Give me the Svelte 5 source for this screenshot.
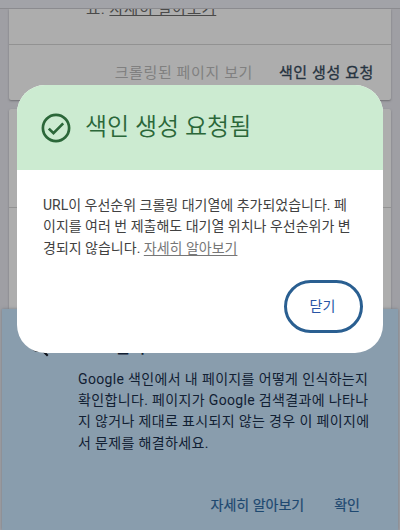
<script lang="ts">
	const message = [
		'URL이 우선순위 크롤링 대기열에 추가되었습니다. 페',
		'이지를 여러 번 제출해도 대기열 위치나 우선순위가 변'
	];

	const tip = [
		'Google 색인에서 내 페이지를 어떻게 인식하는지',
		'확인합니다. 페이지가 Google 검색결과에 나타나',
		'지 않거나 제대로 표시되지 않는 경우 이 페이지에',
		'서 문제를 해결하세요.'
	];
</script>

<div class="screen">
	<header class="topbar"></header>

	<main>
		<section class="card status">
			<p class="more"><span>요. <a href="#more">자세히 알아보기</a></span></p>
			<div class="actions">
				<span class="disabled">크롤링된 페이지 보기</span>
				<span class="request">색인 생성 요청</span>
			</div>
		</section>
		<section class="card details">
			<div class="row"></div>
		</section>
	</main>

	<aside class="tip">
		<svg class="search" viewBox="0 0 24 24" aria-hidden="true">
			<path
				d="M15.5 14h-.79l-.28-.27A6.47 6.47 0 0 0 16 9.5 6.5 6.5 0 1 0 9.5 16c1.61 0 3.09-.59 4.23-1.57l.27.28v.79l5 4.99L20.49 19l-4.99-5zm-6 0a4.5 4.5 0 1 1 0-9 4.5 4.5 0 0 1 0 9z"
			/>
		</svg>
		<div class="tip-content">
			<h2>URL 검사</h2>
			<p>
				{#each tip as line}
					<span class="line">{line}</span>
				{/each}
			</p>
			<div class="tip-actions">
				<span class="learn">자세히 알아보기</span>
				<span>확인</span>
			</div>
		</div>
	</aside>

	<div class="dialog" role="dialog" aria-labelledby="title">
		<div class="dialog-header">
			<svg viewBox="0 0 30 30" aria-hidden="true">
				<circle cx="15" cy="15" r="13.1" />
				<path d="M7.8 15.6l4.7 4.6 9.7-9.8" />
			</svg>
			<h1 id="title">색인 생성 요청됨</h1>
		</div>
		<div class="dialog-body">
			<p>
				{#each message as line}
					<span class="line">{line}</span>
				{/each}
				<span class="line">경되지 않습니다. <a href="#learn">자세히 알아보기</a></span>
			</p>
			<button type="button">닫기</button>
		</div>
	</div>
</div>

<style>
	:global(body) {
		margin: 0;
	}

	.screen {
		position: relative;
		width: 400px;
		height: 530px;
		overflow: hidden;
		background: #9f9fa4;
		font-family: Roboto, 'Noto Sans CJK KR', sans-serif;
		white-space: nowrap;
	}

	h1,
	h2,
	p {
		margin: 0;
		font-weight: 400;
	}

	.line {
		display: block;
	}

	.topbar {
		height: 8px;
		background: #a2a3a8;
		border-bottom: 1px solid #8b8b8f;
	}

	main {
		display: flex;
		flex-direction: column;
		gap: 9px;
		padding: 0 9px;
	}

	.card {
		background: #adadad;
		border-radius: 2px;
		box-shadow: 0 1px 2px #707074;
	}

	.status {
		height: 91px;
		border-radius: 0 0 2px 2px;
		clip-path: inset(0 -4px -4px -4px);
	}

	.more {
		display: flex;
		align-items: flex-end;
		height: 35px;
		padding-left: 77px;
		overflow: hidden;
		border-bottom: 1px solid #929292;
		color: #4a4a4a;
		font-size: 15.5px;
		letter-spacing: 0.4px;
		line-height: 20px;

		span {
			margin-bottom: 25px;
		}

		a {
			color: #4a4a4a;
			text-underline-offset: 1px;
		}
	}

	.actions {
		display: flex;
		justify-content: flex-end;
		gap: 26px;
		padding: 18px 17px 0 0;
		font-size: 15px;
		letter-spacing: 0.6px;
		line-height: 20px;
	}

	.disabled {
		color: #808080;
	}

	.request {
		color: #263340;
		-webkit-text-stroke: 0.3px #263340;
	}

	.details {
		height: 300px;
	}

	.row {
		height: 98px;
		border-bottom: 1px solid #929292;
	}

	.tip {
		position: absolute;
		top: 309px;
		left: 2px;
		display: flex;
		box-sizing: border-box;
		width: 396px;
		height: 221px;
		padding: 27px 0 0 26px;
		background: #899dad;
		box-shadow: 0 0 3px #777b83;
		color: #112033;

		h2 {
			height: 24px;
			font-size: 17.5px;
			font-weight: 500;
			line-height: 23px;
		}

		p {
			margin-top: 9px;
			font-size: 14px;
			letter-spacing: 0.35px;
			line-height: 21.2px;
		}
	}

	.search {
		width: 24px;
		height: 24px;
		margin-right: 26px;
		fill: #10141c;
	}

	.tip-content {
		width: 294px;
	}

	.tip-actions {
		display: flex;
		justify-content: flex-end;
		gap: 30px;
		margin-top: 41px;
		padding-right: 12px;
		color: #1d4870;
		font-size: 14px;
		line-height: 20px;
		-webkit-text-stroke: 0.2px #1d4870;
	}

	.dialog {
		position: absolute;
		top: 85px;
		left: 17px;
		width: 366px;
		height: 268px;
		overflow: hidden;
		border-radius: 28px;
		background: #fff;
	}

	.dialog-header {
		display: flex;
		align-items: center;
		height: 85px;
		padding-left: 24px;
		background: #ccebd1;
		color: #2b6739;

		svg {
			width: 30px;
			height: 30px;
			margin-right: 14px;
			fill: none;
			stroke: #2b6739;
			stroke-width: 2.7;
		}

		h1 {
			margin-bottom: 2px;
			font-size: 24px;
			font-weight: 350;
			line-height: 32px;
		}
	}

	.dialog-body {
		display: flex;
		flex-direction: column;
		padding: 25px 20px 0 26px;
		color: #414141;
		font-size: 14px;

		p {
			line-height: 21.3px;
		}

		a {
			color: #777;
			text-underline-offset: 2px;
		}
	}

	button {
		align-self: flex-end;
		box-sizing: border-box;
		width: 79px;
		height: 53px;
		margin-top: 21px;
		padding: 0 2px 2px 0;
		border: 3px solid #2a5f91;
		border-radius: 27px;
		background: #fff;
		color: #2854a5;
		font: inherit;
	}
</style>
